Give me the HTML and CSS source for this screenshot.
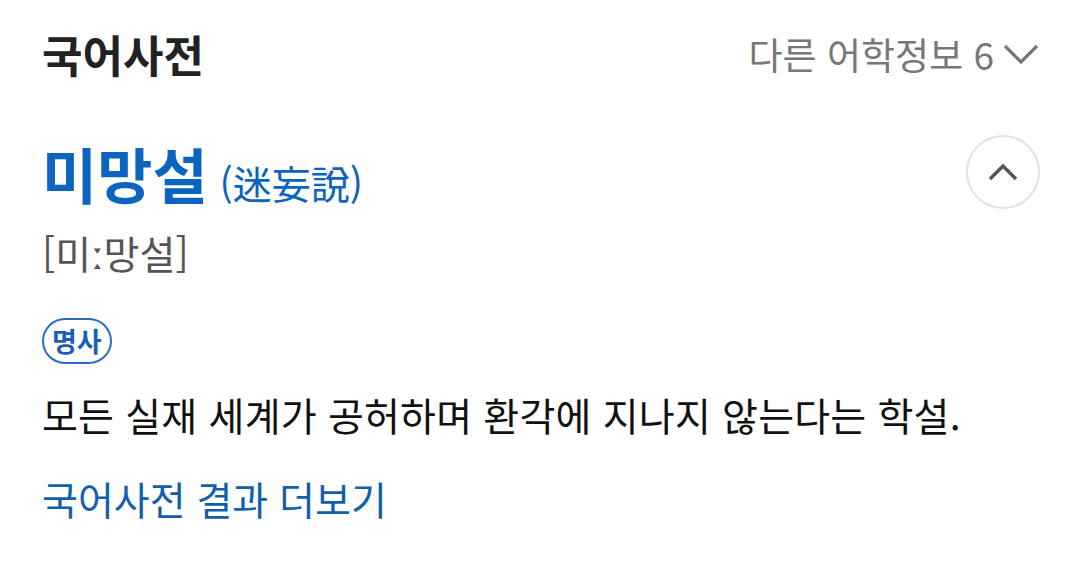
FILE: index.html
```html
<!DOCTYPE html>
<html lang="ko">
<head>
<meta charset="utf-8">
<link rel="stylesheet" href="styles.css">
</head>
<body>
<div class="card">
  <div class="header">
    <h2 class="title">국어사전</h2>
    <div class="more">다른 어학정보 6
      <svg class="chev" width="38" height="24" viewBox="0 0 38 24"><polyline points="3,4 19,20 35,4" fill="none" stroke="#777" stroke-width="3.2"/></svg>
    </div>
  </div>
  <div class="entry">
    <div class="entry-head">
      <div class="word-line"><span class="word">미망설</span> <span class="hanja">(迷妄說)</span></div>
      <button class="toggle"><svg width="32" height="20" viewBox="0 0 32 20"><polyline points="3,17 16,4 29,17" fill="none" stroke="#555" stroke-width="3.4"/></svg></button>
    </div>
    <div class="pron">[미ː망설]</div>
    <div class="badge">명사</div>
    <p class="def">모든 실재 세계가 공허하며 환각에 지나지 않는다는 학설.</p>
    <a class="link">국어사전 결과 더보기</a>
  </div>
</div>
</body>
</html>
```
FILE: styles.css
```css
html, body { margin: 0; padding: 0; background: #fff; }
body { font-family: "Noto Sans CJK KR", "Noto Sans", sans-serif; width: 1080px; height: 576px; overflow: hidden; }
.card { padding: 22px 40px 0 42px; }
.header { display: flex; justify-content: space-between; align-items: center; height: 64px; }
.title { margin: 0; font-size: 44px; font-weight: 700; color: #222; }
.more { display: flex; align-items: center; gap: 8px; font-size: 37px; color: #777; }
.entry { margin-top: 46px; }
.entry-head { display: flex; justify-content: space-between; align-items: center; height: 80px; }
.word-line { display: flex; align-items: baseline; }
.word { font-size: 60px; font-weight: 700; color: #0b64c0; }
.hanja { font-size: 39px; color: #0b64c0; margin-left: 12px; }
.toggle { width: 74px; height: 74px; border-radius: 50%; border: 2px solid #e2e2e2; background: #fff; display: flex; align-items: center; justify-content: center; padding: 0; margin: 0; }
.pron { font-size: 39px; color: #555; margin-top: 12px; line-height: 56px; }
.badge { width: fit-content; margin-top: 38px; border: 2px solid #2a6cc4; border-radius: 24px; color: #1a5fb4; font-size: 27px; font-weight: 700; line-height: 42px; padding: 0 8px; }
.def { margin: 20px 0 0; font-size: 39px; color: #111; line-height: 60px; letter-spacing: 0.2px; }
.link { display: block; margin-top: 26px; font-size: 39px; color: #1160ad; line-height: 56px; }
```
